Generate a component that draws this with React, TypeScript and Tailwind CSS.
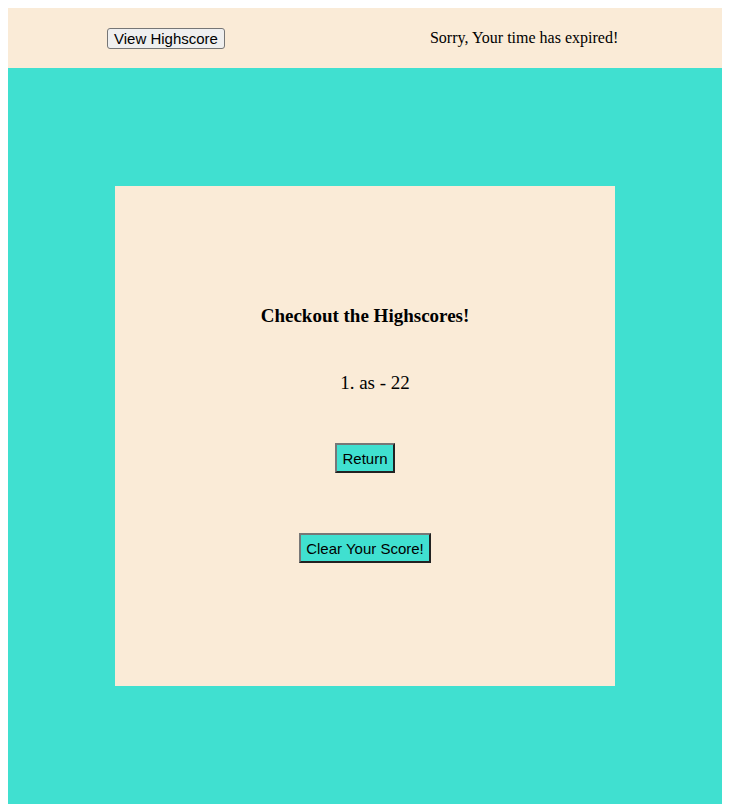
export default function App() {
  return (
    <div className="m-2 font-['Liberation_Serif',serif] text-black">
      <header className="flex h-[60px] items-center gap-[205px] bg-[#faebd7] pl-[99px]">
        <button className="h-[21px] rounded-[3px] border border-[#767676] bg-[#efefef] px-[6px] font-['Liberation_Sans',Arial,sans-serif] text-[15px] leading-[17px]">
          View Highscore
        </button>
        <p className="text-[16px]">Sorry, Your time has expired!</p>
      </header>

      <main className="flex h-[736px] items-center justify-center bg-[#40e0d0]">
        <section className="flex h-[500px] w-[500px] flex-col items-center bg-[#faebd7] pt-[119px]">
          <h3 className="text-[19px] font-bold leading-[22px]">Checkout the Highscores!</h3>
          <ol className="mt-[44px] pl-[20px] text-[19px] leading-[23px]">
            <li>1. as - 22</li>
          </ol>
          <button className="mt-[49px] h-[30px] border-2 border-t-[#777] border-l-[#777] border-b-[#222] border-r-[#222] bg-[#40e0d0] px-[5px] font-['Liberation_Sans',Arial,sans-serif] text-[15px] leading-[17px]">
            Return
          </button>
          <button className="mt-[60px] h-[30px] border-2 border-t-[#777] border-l-[#777] border-b-[#222] border-r-[#222] bg-[#40e0d0] px-[5px] font-['Liberation_Sans',Arial,sans-serif] text-[15px] leading-[17px]">
            Clear Your Score!
          </button>
        </section>
      </main>
    </div>
  )
}
